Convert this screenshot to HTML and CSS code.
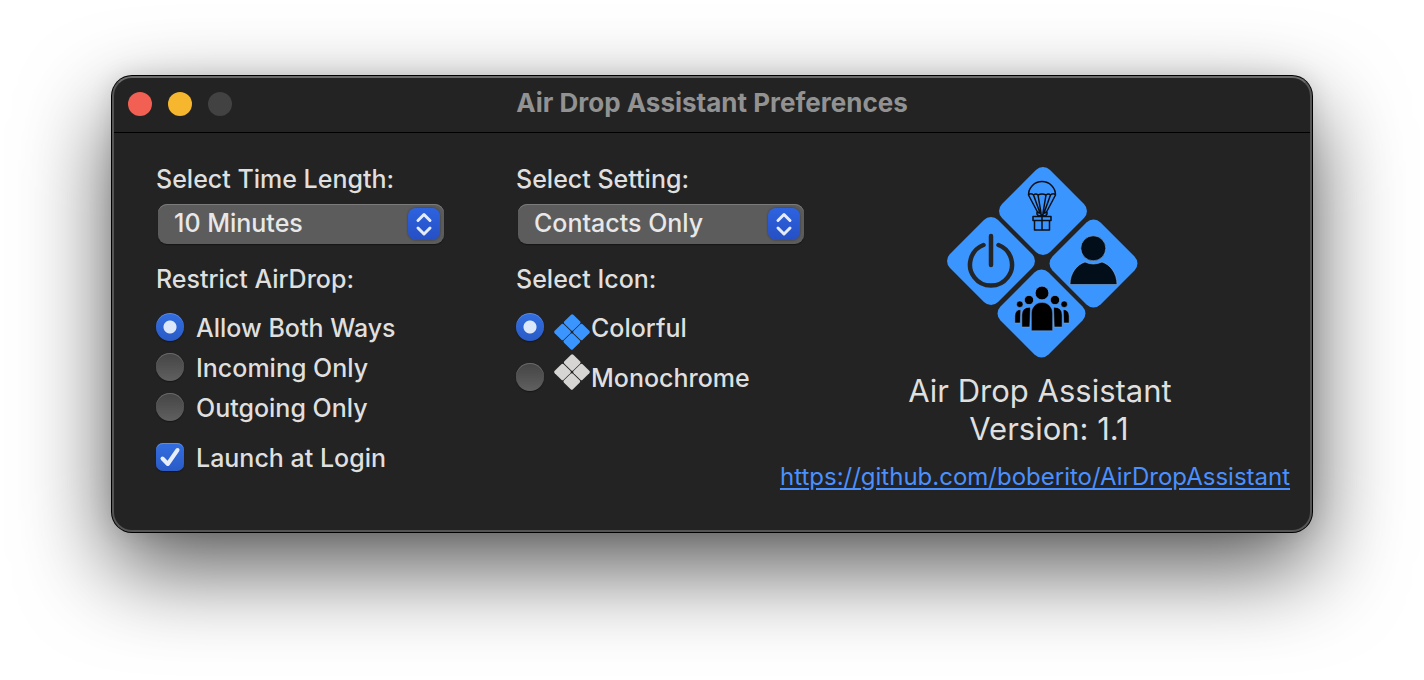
FILE: index.html
```html
<!DOCTYPE html>
<html lang="en">
<head>
<meta charset="utf-8">
<title>Air Drop Assistant Preferences</title>
<link rel="stylesheet" href="styles.css">
</head>
<body>
<main class="window">
  <header class="titlebar">
    <div class="lights">
      <button class="light close" type="button" aria-label="Close"></button>
      <button class="light minimize" type="button" aria-label="Minimize"></button>
      <button class="light zoom" type="button" aria-label="Zoom" disabled></button>
    </div>
    <h1 class="title">Air Drop Assistant Preferences</h1>
  </header>
  <form class="content">
    <div class="column">
      <label class="label" for="time">Select Time Length:</label>
      <div class="popup">
        <select class="select" id="time"><option>10 Minutes</option></select>
        <svg class="stepper" viewBox="0 0 32 32" aria-hidden="true"><path d="M10 12.5 16 6.5 22 12.5M10 20 16 26 22 20"/></svg>
      </div>
      <fieldset class="group">
        <legend class="label">Restrict AirDrop:</legend>
        <label class="option"><input class="radio" type="radio" name="restrict" checked><span class="caption">Allow Both Ways</span></label>
        <label class="option"><input class="radio" type="radio" name="restrict"><span class="caption">Incoming Only</span></label>
        <label class="option"><input class="radio" type="radio" name="restrict"><span class="caption">Outgoing Only</span></label>
      </fieldset>
      <label class="option launch"><input class="checkbox" type="checkbox" checked><svg class="tick" viewBox="0 0 28 28" aria-hidden="true"><path d="M6.500 15.500 11.800 21 21.500 7"/></svg><span class="caption">Launch at Login</span></label>
    </div>
    <div class="column">
      <label class="label" for="setting">Select Setting:</label>
      <div class="popup">
        <select class="select" id="setting"><option>Contacts Only</option></select>
        <svg class="stepper" viewBox="0 0 32 32" aria-hidden="true"><path d="M10 12.5 16 6.5 22 12.5M10 20 16 26 22 20"/></svg>
      </div>
      <fieldset class="group">
        <legend class="label">Select Icon:</legend>
        <label class="option icon-option"><input class="radio" type="radio" name="icon" checked><svg class="mini mini-low" viewBox="0 0 36 36" aria-hidden="true"><g fill="#3b95ff"><rect x="-6.300" y="-6.300" width="12.600" height="12.600" rx="1.600" transform="translate(18.2 8.5) rotate(45)"/><rect x="-6.300" y="-6.300" width="12.600" height="12.600" rx="1.600" transform="translate(8.5 18) rotate(45)"/><rect x="-6.300" y="-6.300" width="12.600" height="12.600" rx="1.600" transform="translate(27.5 18) rotate(45)"/><rect x="-6.300" y="-6.300" width="12.600" height="12.600" rx="1.600" transform="translate(17.8 27.5) rotate(45)"/></g></svg><span class="caption">Colorful</span></label>
        <label class="option icon-option"><input class="radio" type="radio" name="icon"><svg class="mini mini-high" viewBox="0 0 36 36" aria-hidden="true"><g fill="#d6d5d3"><rect x="-6.300" y="-6.300" width="12.600" height="12.600" rx="1.600" transform="translate(18.2 8.5) rotate(45)"/><rect x="-6.300" y="-6.300" width="12.600" height="12.600" rx="1.600" transform="translate(8.5 18) rotate(45)"/><rect x="-6.300" y="-6.300" width="12.600" height="12.600" rx="1.600" transform="translate(27.5 18) rotate(45)"/><rect x="-6.300" y="-6.300" width="12.600" height="12.600" rx="1.600" transform="translate(17.8 27.5) rotate(45)"/></g></svg><span class="caption">Monochrome</span></label>
      </fieldset>
    </div>
    <section class="about">
      <svg class="logo" viewBox="0 0 192 192" role="img" aria-label="Air Drop Assistant logo">
        <g fill="#3b95ff">
          <rect x="-34" y="-34" width="68" height="68" rx="10" transform="translate(97 45) rotate(45)"/>
          <rect x="-34" y="-34" width="68" height="68" rx="10" transform="translate(45 95) rotate(45)"/>
          <rect x="-34" y="-34" width="68" height="68" rx="10" transform="translate(147.500 97.500) rotate(45)"/>
          <rect x="-34" y="-34" width="68" height="68" rx="10" transform="translate(95.500 147.500) rotate(45)"/>
        </g>
        <g fill="none" stroke="#0b0e14" stroke-width="1.500" stroke-linejoin="round" stroke-linecap="round">
          <path d="M82.500 29a13.500 13.500 0 0 1 27 0Q107.500 26.500 104.500 29Q102.500 27 100 29Q96 27 92 29Q90 27 87.500 29Q84.500 26.500 82.500 29L92 47M109.500 29L100 47M87.500 29L94 47M104.500 29L98 47M92 29L95 47M100 29L97 47"/>
          <path d="M87 50.500h18v4h-18zM88.500 54.500h15v9.500h-15zM96 50.500V64M96 50Q90 50 91 46.500Q94 45.500 96 50Q98 45.500 101 46.500Q102 50 96 50"/>
        </g>
        <g fill="none" stroke="#232628" stroke-width="4.500" stroke-linecap="round"><path d="M45 70V99M37.500 79A21 21 0 1 0 52.500 79"/></g>
        <g fill="#020f1a" stroke="#86aed8" stroke-width=".6">
          <circle cx="147.300" cy="82.300" r="12.500"/>
          <path d="M124 118.500C124 107 131 98.500 139 96Q147 100 156 96C164 98.500 171 107 171 118.500Z"/>
        </g>
        <g fill="#000" stroke="#7fb5f5" stroke-width=".5">
          <circle cx="96" cy="127" r="6.800"/><circle cx="83" cy="134" r="4.600"/><circle cx="109" cy="134" r="4.600"/><circle cx="73.800" cy="138.200" r="3.300"/><circle cx="118.200" cy="138.200" r="3.300"/>
          <path d="M85.300 164.800V147a10.700 10.700 0 0 1 21.400 0V164.800ZM84.500 141.200Q76 140.500 75.800 149V161h8ZM107.500 141.200Q116 140.500 116.200 149V161h-8ZM74.800 143.500Q69 143.500 68.800 150V157h5.500ZM117.200 143.500Q123 143.500 123.200 150V157h-5.500Z"/>
        </g>
      </svg>
      <p class="product">Air Drop Assistant</p>
      <p class="product version">Version: 1.1</p>
      <a class="link" href="https://github.com/boberito/AirDropAssistant">https://github.com/boberito/AirDropAssistant</a>
    </section>
  </form>
</main>
</body>
</html>
```

FILE: styles.css
```css
* { box-sizing: border-box; }
html { background: #fff; }
body {
  min-height: 100vh;
  margin: 0;
  padding: 76px 112px;
  color: #dfdfdf;
  font: 500 25px/32px Inter, "Liberation Sans", sans-serif;
}
.window {
  border: 2px solid #555;
  border-top-color: #6b6b6b;
  border-radius: 20px;
  background: #232323;
  box-shadow: 0 0 0 1px #000, 0 36px 90px rgba(0, 0, 0, .66), 0 0 24px rgba(0, 0, 0, .12);
}
.titlebar {
  display: grid;
  grid-template-columns: 1fr auto 1fr;
  align-items: center;
  height: 55px;
  padding: 0 14px 2px;
  border-bottom: 1px solid #000;
}
.lights { display: flex; gap: 16px; }
.light {
  width: 24px;
  height: 24px;
  padding: 0;
  border: 0;
  border-radius: 50%;
}
.close { background: #f16052; }
.minimize { background: #f6b72e; }
.zoom { background: #424242; }
.title {
  margin: 0;
  padding-bottom: 2px;
  color: #929292;
  font-size: 26px;
  font-weight: 700;
  line-height: 32px;
}
.content {
  display: grid;
  grid-template-columns: 360px 254px 1fr;
  padding: 30px 0 37px 42px;
}
.label { display: block; padding: 0; }
.popup {
  position: relative;
  width: 286px;
  margin: 9px 2px 19px;
}
.select {
  display: block;
  appearance: none;
  width: 100%;
  height: 40px;
  padding: 0 44px 2px 16px;
  border: 0;
  border-radius: 9px;
  background: #5c5c5c;
  box-shadow: inset 0 1px #7b7b7b, 0 1px 1px #161616;
  color: #e8e8e8;
  font: inherit;
}
.stepper {
  position: absolute;
  top: 4px;
  right: 4px;
  width: 32px;
  height: 32px;
  border-radius: 8px;
  background: linear-gradient(#2d63e0, #264fc4);
  box-shadow: 0 0 2px #333;
  fill: none;
  stroke: #e4ebfb;
  stroke-width: 3;
  stroke-linecap: round;
  stroke-linejoin: round;
  pointer-events: none;
}
.group {
  min-width: 0;
  margin: 0;
  padding: 0;
  border: 0;
}
.option {
  display: flex;
  align-items: center;
  height: 40px;
  position: relative;
}
.caption { padding-top: 2px; }
.label + .option { margin-top: 12px; }
.radio, .checkbox {
  appearance: none;
  flex: none;
  width: 28px;
  height: 28px;
  margin: 0 12px 0 0;
  border-radius: 50%;
  background: linear-gradient(#444, #606060);
  box-shadow: inset 0 1px #6a6a6a, 0 1px 1px #161616;
}
.radio:checked {
  background: radial-gradient(circle, #dce7fa 0 6px, transparent 7px), linear-gradient(#326ee0, #2a5bc6);
  box-shadow: inset 0 1px #5c8bea, 0 1px 1px #161616;
}
.checkbox { border-radius: 7px; }
.checkbox:checked {
  background: linear-gradient(#326ee0, #2a5bc6);
  box-shadow: inset 0 1px #5c8bea, 0 1px 1px #161616;
}
.tick {
  position: absolute;
  left: 0;
  width: 28px;
  height: 28px;
  fill: none;
  stroke: #e6eefc;
  stroke-width: 4;
  stroke-linecap: round;
  stroke-linejoin: round;
  pointer-events: none;
}
.launch { margin-top: 10px; }
.icon-option { height: 46px; }
.label + .icon-option { margin: 9px 0 4px; }
.icon-option .radio { margin-right: 10px; }
.mini { width: 36px; height: 36px; margin-right: 1px; }
.mini-low { align-self: flex-end; }
.mini-high { align-self: flex-start; }
.about {
  display: flex;
  flex-direction: column;
  align-items: center;
  padding-top: 3px;
}
.logo { width: 192px; height: 192px; margin: 0 0 14px 4px; }
.product { margin: 0; font-size: 31px; font-weight: 400; line-height: 38px; }
.version { padding-left: 18px; }
.link {
  margin: 13px 10px 0 0;
  color: #4a90ff;
  font-size: 24px;
  font-weight: 400;
  text-underline-offset: 3px;
}
```
